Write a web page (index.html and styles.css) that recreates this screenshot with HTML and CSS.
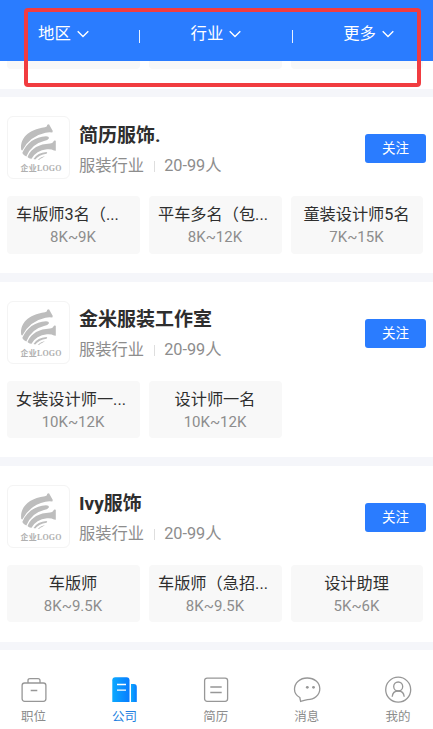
FILE: index.html
```html
<!DOCTYPE html>
<html lang="zh-CN">
<head>
<meta charset="utf-8">
<title>公司</title>
<link rel="stylesheet" href="styles.css">
</head>
<body>
<svg class="defs" aria-hidden="true">
  <symbol id="chevron" viewBox="0 0 12 8"><path d="M.7 1.2 6 6.4l5.300-5.200" fill="none" stroke="currentColor" stroke-width="1.400"/></symbol>
  <symbol id="logo" viewBox="0 0 61 61">
    <g fill="#bdbdbd" transform="translate(0 1)">
      <path d="M13.300 32C11.500 21 20 11.500 37 9.300Q39.300 8.800 39.300 6.800L41 6.200 44.800 13 44.300 14.600Q41 14 37.500 14.800 22 18 14.300 32.500Z"/>
      <path d="M14.300 35C18.500 25 27 18.700 38 18.200Q41 18.200 41 20.300 40 22.300 36 23 23.500 26 18.300 38.500Q15.500 37.500 14.300 35Z"/>
      <path d="M19.500 39C23.500 30 31 26.300 42 25.600Q45 25 46.300 22.500L47.800 22.800V32.800L46 32.600Q43.500 30.800 39 31.200 28 32.300 23.500 40.800Q21 41 19.500 39Z"/>
      <path d="M25.500 41Q29.500 34.500 38.500 34Q40 34.500 38.500 35.800 31 37 27.200 41.500Z"/>
      <path d="M30 41.500Q33 38.500 37 38L34.500 39.800Q32 40.500 31 42Z"/>
    </g>
    <text x="12.500" y="54.200" textLength="41" lengthAdjust="spacing" class="logo-text">企业LOGO</text>
  </symbol>
</svg>

<header class="filters">
  <div class="filter"><span>地区</span><svg class="chevron"><use href="#chevron"/></svg></div>
  <i class="bar"></i>
  <div class="filter"><span>行业</span><svg class="chevron"><use href="#chevron"/></svg></div>
  <i class="bar"></i>
  <div class="filter"><span>更多</span><svg class="chevron"><use href="#chevron"/></svg></div>
</header>
<div class="highlight"></div>

<main>
  <div class="chips clipped"><div class="chip"></div><div class="chip"></div><div class="chip"></div></div>

  <section class="company">
    <div class="info">
      <svg class="logo"><use href="#logo"/></svg>
      <div class="text"><h2>简历服饰.</h2><p>服装行业<i></i>20-99人</p></div>
      <button>关注</button>
    </div>
    <div class="chips">
      <div class="chip"><b class="long">车版师3名（...</b><span>8K~9K</span></div>
      <div class="chip"><b class="long">平车多名（包...</b><span>8K~12K</span></div>
      <div class="chip"><b>童装设计师5名</b><span>7K~15K</span></div>
    </div>
  </section>

  <section class="company">
    <div class="info">
      <svg class="logo"><use href="#logo"/></svg>
      <div class="text"><h2>金米服装工作室</h2><p>服装行业<i></i>20-99人</p></div>
      <button>关注</button>
    </div>
    <div class="chips">
      <div class="chip"><b class="long">女装设计师一...</b><span>10K~12K</span></div>
      <div class="chip"><b>设计师一名</b><span>10K~12K</span></div>
    </div>
  </section>

  <section class="company">
    <div class="info">
      <svg class="logo"><use href="#logo"/></svg>
      <div class="text"><h2>Ivy服饰</h2><p>服装行业<i></i>20-99人</p></div>
      <button>关注</button>
    </div>
    <div class="chips">
      <div class="chip"><b>车版师</b><span>8K~9.5K</span></div>
      <div class="chip"><b class="long">车版师（急招...</b><span>8K~9.5K</span></div>
      <div class="chip"><b>设计助理</b><span>5K~6K</span></div>
    </div>
  </section>
</main>

<nav class="tabs">
  <a class="tab"><svg viewBox="0 0 28 28"><rect x="2.100" y="7" width="23.800" height="18.300" rx="2.500"/><path d="M8 7V4.500Q8 2.600 10 2.600H18Q20 2.600 20 4.500V7M10.700 14.500H17.300"/></svg>职位</a>
  <a class="tab active"><svg viewBox="0 0 28 28">
    <defs><linearGradient id="blue"><stop offset="0" stop-color="#0ca9ff"/><stop offset="1" stop-color="#087cff"/></linearGradient></defs>
    <path class="solid" d="M1.300 26V4.200Q1.300 1.200 4.300 1.200H15.500Q18.500 1.200 18.500 4.200V26Z"/><path class="solid" d="M20 26V8H22.800Q25.800 8 25.800 11V26Z"/><path class="line" d="M6 8.500H15M6 14.200H15"/></svg>公司</a>
  <a class="tab"><svg viewBox="0 0 28 28"><rect x="2.600" y="2.100" width="23" height="23.200" rx="2.500"/><path d="M8.300 11H19.700M8.300 16.500H19.700"/></svg>简历</a>
  <a class="tab"><svg viewBox="0 0 28 28"><path d="M7.600 25.400 6.800 21.500C3.500 19.700 1.500 16.800 1.500 13.300 1.500 6.800 7 2 14.200 2S26.800 6.700 26.800 12.800C26.800 19 21.500 23.600 14.500 23.600Q11.500 24.300 7.600 25.400Z"/><g class="dots"><circle cx="14.300" cy="11.300" r="1.400"/><circle cx="20.500" cy="11.300" r="1.400"/></g></svg>消息</a>
  <a class="tab"><svg viewBox="0 0 28 28"><circle cx="14.200" cy="13.700" r="12.500"/><circle cx="14.200" cy="10.500" r="4.500"/><path d="M8.200 20.800C8.500 17.300 11 15 14.200 15S19.900 17.300 20.200 20.800"/></svg>我的</a>
</nav>
</body>
</html>
```
FILE: styles.css
```css
* { box-sizing: border-box; }
body {
  margin: 0;
  height: 729px;
  overflow: hidden;
  display: flex;
  flex-direction: column;
  background: #fff;
  font-family: Roboto, "Noto Sans CJK SC", sans-serif;
  color: #2e2e2e;
}
.defs { position: absolute; width: 0; height: 0; }

.filters {
  height: 61px;
  flex: none;
  display: flex;
  align-items: center;
  justify-content: space-between;
  padding: 4px 39px 0 38px;
  background: #2a7cff;
  color: #fff;
  font-size: 16.400px;
}
.filter { display: flex; align-items: center; line-height: 24px; }
.filter span { padding-top: 2px; }
.chevron { width: 12px; height: 8px; margin: 2px 0 0 6px; }
.bar { width: 1px; height: 13px; margin-top: 7px; background: #e8f1ff; }
.highlight {
  position: absolute;
  left: 24px;
  top: 8px;
  width: 397px;
  height: 79px;
  border: 4px solid #f13c40;
  border-radius: 4px;
}

main { flex: none; height: 589px; background: #f5f6fa; }
.company {
  height: 175.700px;
  margin-bottom: 8.600px;
  padding: 19px 7px 0;
  background: #fff;
}
.info { display: flex; height: 80px; align-items: flex-start; }
.logo { width: 63px; height: 63px; border: 1px solid #f4f4f4; border-radius: 6px; }
.logo-text { font: bold 8px "Liberation Serif", "Noto Sans CJK SC", serif; fill: #b0b0b0; }
.text { flex: 1; padding-left: 9px; }
h2 { margin: 5.300px 0 0; font-size: 19px; line-height: 28px; font-weight: 700; }
p { margin: 3px 0 0; display: flex; align-items: center; font-size: 16.300px; line-height: 26px; color: #8d8d8d; }
p i { width: 1px; height: 11px; margin: 1px 9px 0 10px; background: #dedede; }
button {
  width: 61px;
  height: 29px;
  margin: 18px 0 0;
  padding: 0;
  border: 0;
  border-radius: 3px;
  background: #2a7cff;
  color: #fff;
  font: 13.500px/27px Roboto, "Noto Sans CJK SC", sans-serif;
}
.chips { display: grid; grid-template-columns: 133px 133px 132px; gap: 9px; }
.chip {
  height: 57.500px;
  padding: 7px 1px 0 0;
  border-radius: 4px;
  background: #f8f8f8;
  text-align: center;
}
.chip b {
  display: block;
  white-space: nowrap;
  font-weight: 400;
  font-size: 16.200px;
  line-height: 24px;
}
.chip .long { padding-left: 9px; text-align: left; }
.chip span { display: block; margin-top: -1px; font-size: 15px; line-height: 22px; color: #8d8d8d; }
.clipped { height: 28px; margin-bottom: 8.300px; padding: 0 7px; background: #fff; }
.clipped .chip { height: 8px; padding: 0; border-radius: 0 0 4px 4px; }

.tabs {
  flex: 1;
  display: flex;
  justify-content: space-between;
  padding: 26px 9px 0 7.500px;
  background: #fff;
}
.tab {
  width: 52px;
  display: flex;
  flex-direction: column;
  align-items: center;
  font-size: 12.500px;
  line-height: 25px;
  color: #8c8c8c;
}
.tab svg { width: 28px; height: 28px; fill: none; stroke: #979797; stroke-width: 1.300; }
.tab .dots { fill: #979797; stroke: none; }
.tab .solid { fill: url(#blue); stroke: none; }
.tab .line { stroke: #fff; }
.active { color: #2280e0; }
```
